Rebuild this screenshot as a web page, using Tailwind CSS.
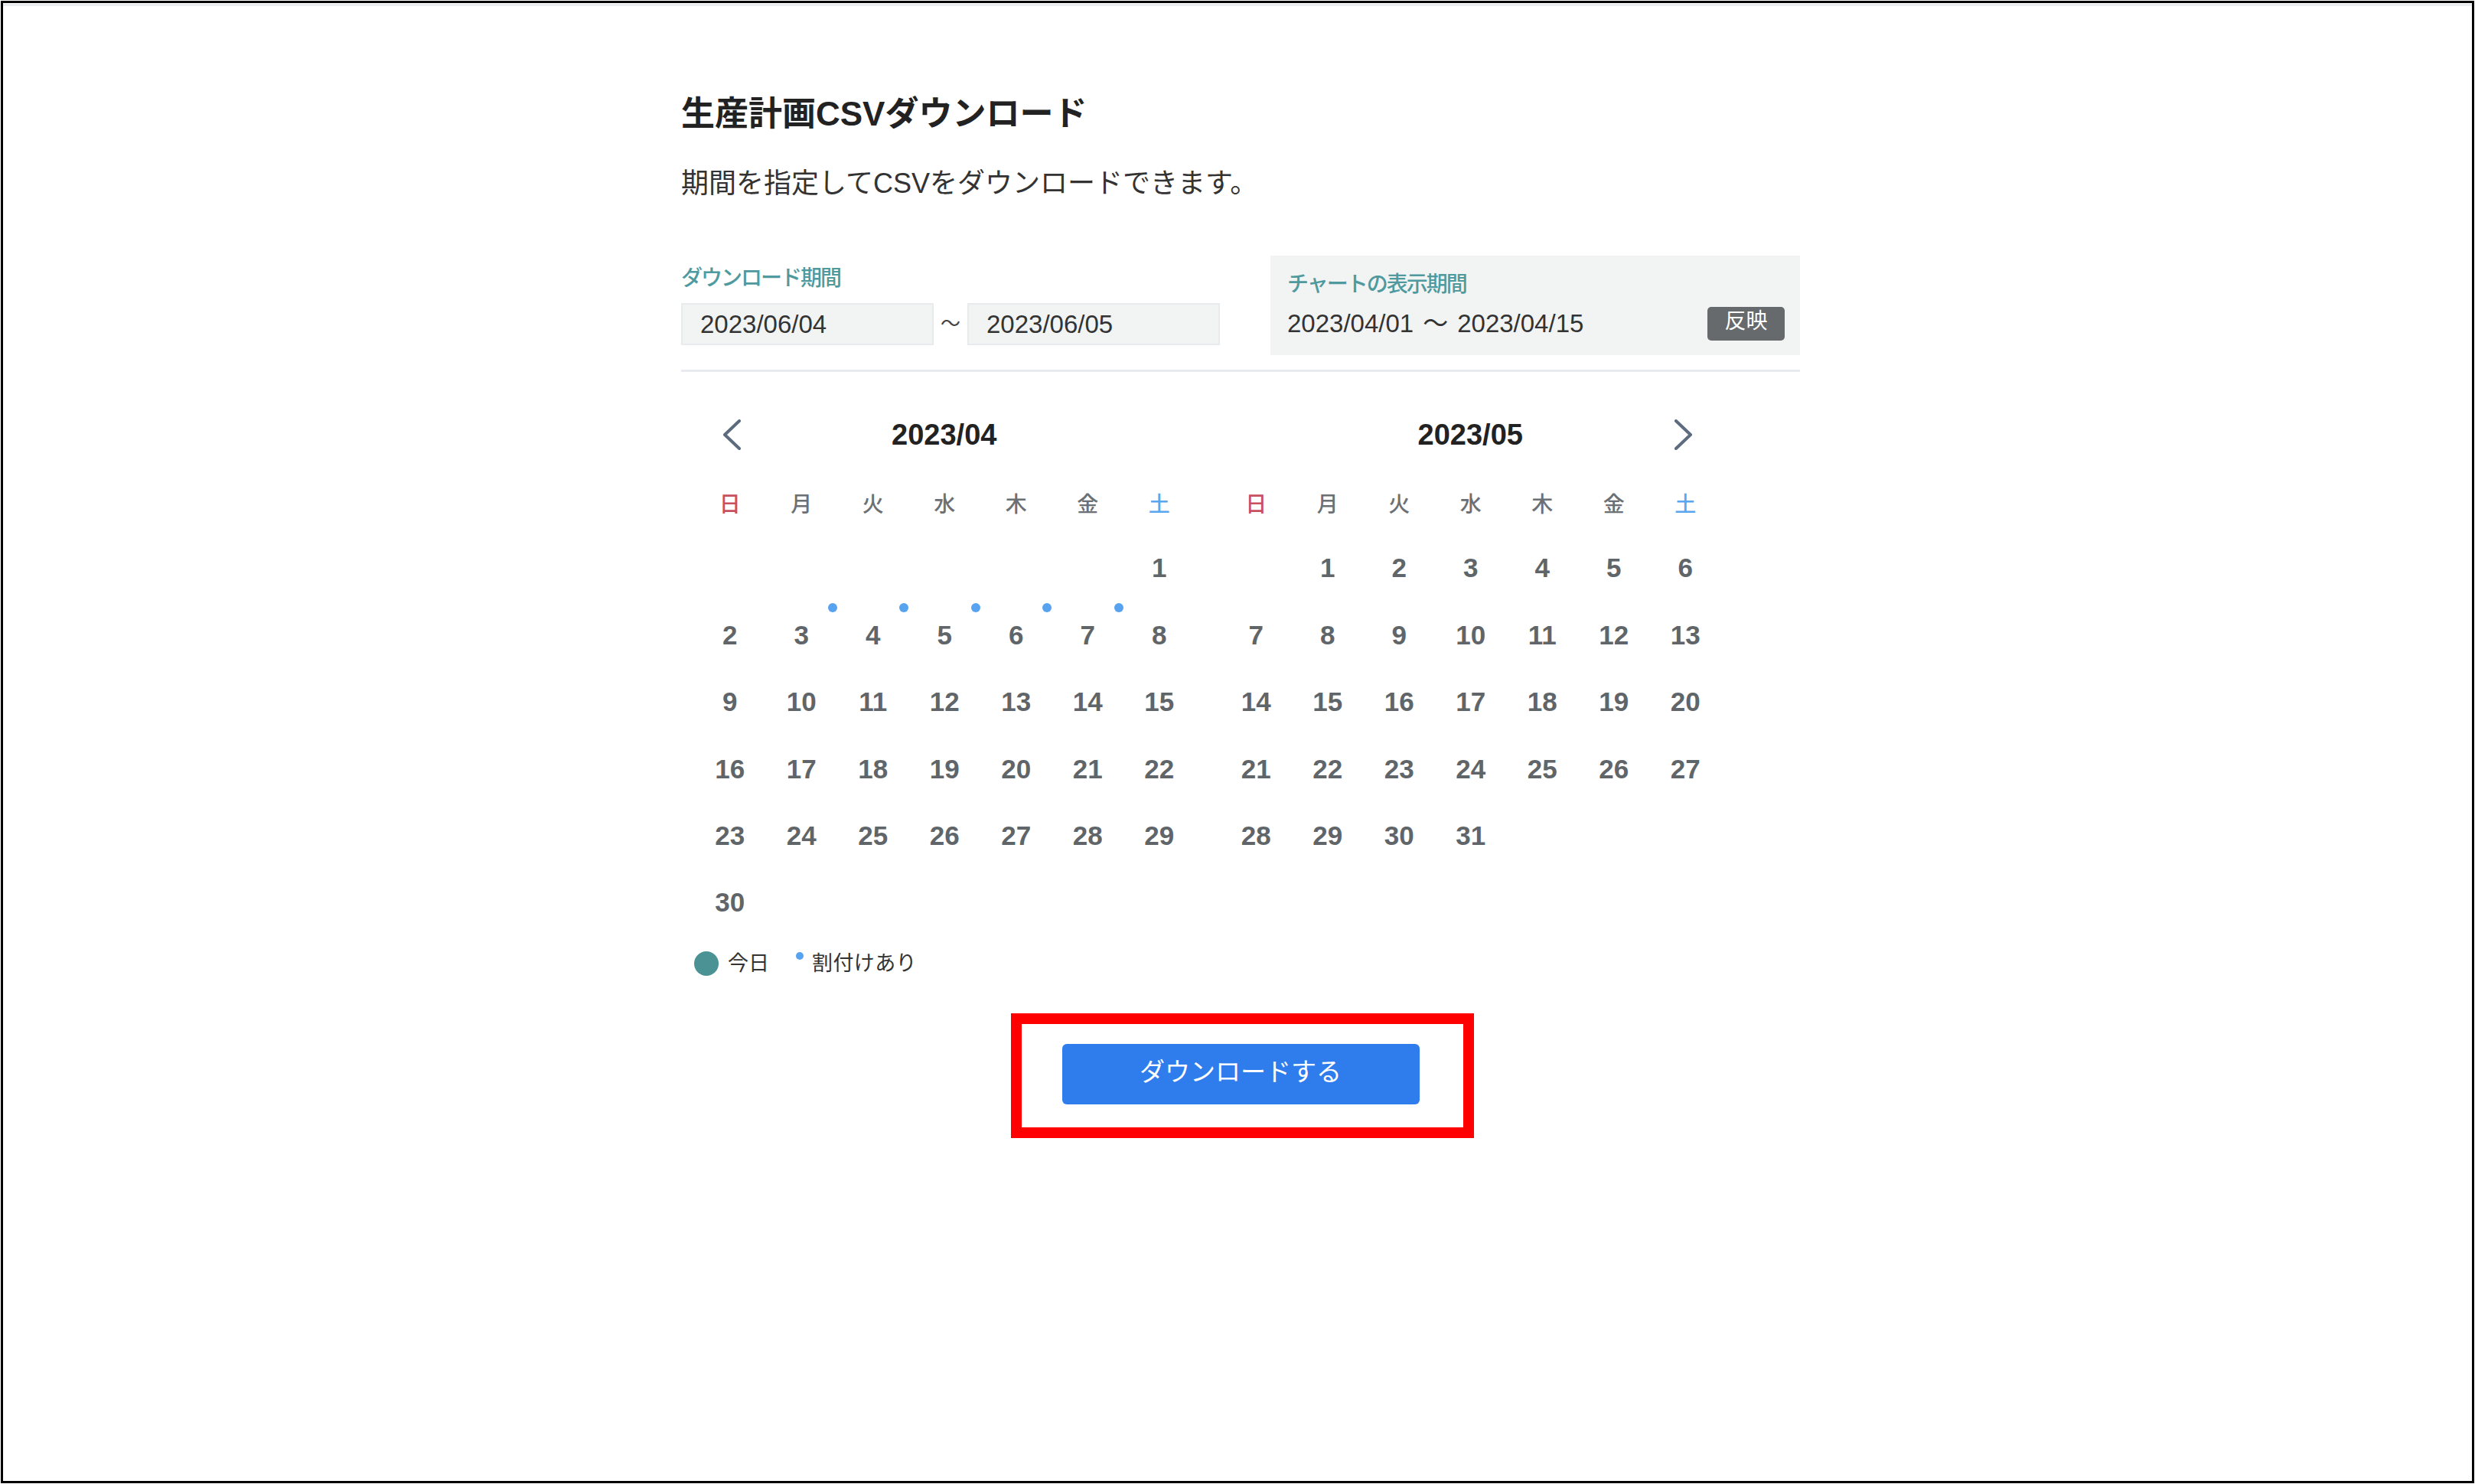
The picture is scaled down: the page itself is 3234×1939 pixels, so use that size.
<!DOCTYPE html>
<html lang="ja">
<head>
  <meta charset="UTF-8">
  <title>生産計画CSVダウンロード</title>
  <script src="https://cdn.jsdelivr.net/npm/@tailwindcss/browser@4"></script>
</head>
<body class="bg-white font-['Liberation_Sans','Noto_Sans_CJK_JP',sans-serif]">
<div class="relative w-[3234px] h-[1939px] p-px overflow-hidden">
  <div class="w-[3232px] h-[1937px] border-[3px] border-black">
    <div class="h-[3px] mt-px bg-[#e9edf0]"></div>

    <main class="w-[1462px] ml-[886px] pt-[111px]">
      <!-- タイトル -->
      <h1 class="text-[44px] leading-[60px] font-bold text-[#222]">生産計画CSVダウンロード</h1>
      <p class="mt-[36px] text-[36px] leading-[50px] text-[#333]">期間を指定してCSVをダウンロードできます。</p>

      <!-- 期間 -->
      <div class="mt-[69px] flex justify-between">
        <div class="pt-[12px]">
          <div class="text-[28px] leading-[36px] tracking-[-2px] font-medium text-[#4f9a9e]">ダウンロード期間</div>
          <div class="mt-[14px] flex items-center">
            <div class="w-[330px] h-[55px] pl-[23px] flex items-center bg-[#f2f4f4] border-2 border-[#e7ebee] text-[33px] text-[#333]">2023/06/04</div>
            <span class="w-[44px] text-center text-[26px] text-[#444]">～</span>
            <div class="w-[330px] h-[55px] pl-[23px] flex items-center bg-[#f2f4f4] border-2 border-[#e7ebee] text-[33px] text-[#333]">2023/06/05</div>
          </div>
        </div>
        <div class="w-[692px] h-[130px] bg-[#f2f4f4] pl-[22px] pr-[20px] pt-[20px]">
          <div class="text-[28px] leading-[36px] tracking-[-2px] font-medium text-[#4f9a9e]">チャートの表示期間</div>
          <div class="flex items-center justify-between mt-[11px]">
            <div class="flex gap-[12px] text-[33px] leading-[44px] text-[#333]">
              <span>2023/04/01</span><span>～</span><span>2023/04/15</span>
            </div>
            <button class="w-[101px] h-[44px] rounded-[5px] bg-[#666a6d] text-white text-[28px] leading-[36px] pb-[6px]">反映</button>
          </div>
        </div>
      </div>
      <div class="mt-[19px] h-[3px] bg-[#e7ebf0]"></div>

      <!-- カレンダー -->
      <div id="calendars" class="mt-[52px] ml-[17px] flex gap-[33px]"></div>

      <!-- 凡例 -->
      <div class="mt-[18px] h-[36px] flex items-center text-[27px] text-[#333]">
        <span class="ml-[17px] w-[32px] h-[32px] rounded-full bg-[#4a9294]"></span>
        <span class="ml-[12px]">今日</span>
        <span class="ml-[35px] mb-[20px] w-[10px] h-[10px] rounded-full bg-[#57a3ef]"></span>
        <span class="ml-[11px] tracking-[0.4px]">割付けあり</span>
      </div>

      <div class="mt-[87px] flex justify-center">
        <button class="w-[467px] h-[79px] rounded-[6px] bg-[#2f7ded] text-white text-[33px] pb-[7px]">ダウンロードする</button>
      </div>
    </main>
  </div>

  <!-- 赤枠の注釈 -->
  <div class="absolute left-[1321px] top-[1324px] w-[605px] h-[163px] border-[14px] border-[#ff0000]"></div>
</div>

<script>
  const weekdays = ['日', '月', '火', '水', '木', '金', '土'];
  const months = [
    { label: '2023/04', offset: 6, days: 30, dots: [3, 4, 5, 6, 7], prev: true },
    { label: '2023/05', offset: 1, days: 31, dots: [], prev: false }
  ];
  const prevIcon = `<svg class="w-[24px] h-[40px] ml-[37px]" viewBox="0 0 24 40" fill="none" stroke="#5d6b7e" stroke-width="4" stroke-linecap="round" stroke-linejoin="round"><path d="M22 2 3 20l19 18"/></svg>`;
  const nextIcon = `<svg class="w-[24px] h-[40px] ml-auto mr-[37px]" viewBox="0 0 24 40" fill="none" stroke="#5d6b7e" stroke-width="4" stroke-linecap="round" stroke-linejoin="round"><path d="m2 2 19 18L2 38"/></svg>`;

  document.getElementById('calendars').innerHTML = months.map(m => {
    const head = weekdays.map((w, i) => {
      const color = i === 0 ? 'text-[#c9505f]' : i === 6 ? 'text-[#5aa7ef]' : 'text-[#6b7075]';
      return `<div class="h-[80px] pt-[2px] flex items-center justify-center text-[28px] font-medium ${color}">${w}</div>`;
    }).join('');
    let cells = '<div class="h-[87.4px]"></div>'.repeat(m.offset);
    for (let d = 1; d <= m.days; d++) {
      const dot = m.dots.includes(d)
        ? '<span class="absolute left-[81px] top-[2px] w-[12px] h-[12px] rounded-full bg-[#57a3ef]"></span>'
        : '';
      cells += `<div class="relative h-[87.4px] flex items-center justify-center text-[35px] font-bold text-[#5f6568]">${d}${dot}</div>`;
    }
    return `<section class="w-[654.5px]">
      <div class="h-[60px] grid grid-cols-[1fr_auto_1fr] items-center">
        <div>${m.prev ? prevIcon : ''}</div>
        <div class="text-[38px] font-bold text-[#222] -ml-px">${m.label}</div>
        <div>${m.prev ? '' : nextIcon}</div>
      </div>
      <div class="mt-[21px] grid grid-cols-7">${head}</div>
      <div class="grid grid-cols-7">${cells}</div>
    </section>`;
  }).join('');
</script>
</body>
</html>
